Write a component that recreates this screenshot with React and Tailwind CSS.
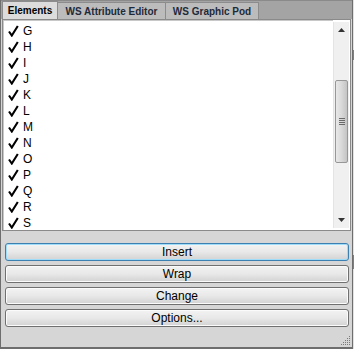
import React from "react";

const items = ["G","H","I","J","K","L","M","N","O","P","Q","R","S"];

function Check() {
  return (
    <svg width="11" height="12" viewBox="0 0 11 12" className="shrink-0">
      <path d="M1 6.5 L3.8 10.5 L9.8 1" fill="none" stroke="#000" strokeWidth="2.1" strokeLinejoin="miter" />
    </svg>
  );
}

function Btn({ label, focus }) {
  return (
    <div
      className={
        "h-[18px] rounded-[3px] border flex items-center justify-center text-[12px] text-black bg-gradient-to-b from-[#f3f3f3] via-[#e8e8e8] to-[#d2d2d2] " +
        (focus ? "border-[#3c7fb1] shadow-[inset_0_0_0_1px_#9fdcf7]" : "border-[#707070] shadow-[inset_0_0_0_1px_#fbfbfb]")
      }
    >
      {label}
    </div>
  );
}

export default function App() {
  return (
    <div className="w-[354px] h-[349px] flex bg-[#e2e2e2]" style={{ fontFamily: '"Liberation Sans", Arial, sans-serif' }}>
      <div className="w-[353px] h-[349px] flex flex-col bg-[#d6d6d6] border-l border-r border-b-2 border-[#6e6e6e]">
        {/* tab bar */}
        <div className="h-[19px] flex items-end bg-[#a4a4a4] border-t border-[#8a8a8a] pl-[1px]">
          <div className="w-[56px] h-[18px] flex items-center justify-center bg-[#dcdcdc] border border-b-0 border-[#8c8c8c] text-[10px] font-bold text-black">Elements</div>
          <div className="w-[108px] h-[17px] flex items-center justify-center bg-[#bcbcbc] border border-l-0 border-b-0 border-[#8c8c8c] text-[10px] font-bold text-[#1e2a3a]">WS Attribute Editor</div>
          <div className="w-[93px] h-[17px] flex items-center justify-center bg-[#bcbcbc] border border-l-0 border-b-0 border-[#8c8c8c] text-[10px] font-bold text-[#1e2a3a]">WS Graphic Pod</div>
        </div>
        {/* list */}
        <div className="mx-[1px] h-[212px] flex bg-white border border-[#8a8a8a]">
          <div className="flex-1 flex flex-col pt-[2px] pl-[4px] border-l border-t border-[#c8c8c8]">
            {items.map((l) => (
              <div key={l} className="h-[16px] flex items-center gap-[4px] text-[12px] text-black">
                <Check />
                <span>{l}</span>
              </div>
            ))}
          </div>
          <div className="w-[16px] my-[2px] mr-[1px] flex flex-col bg-[#f0f0f0] border-l border-[#e4e4e4]">
            <div className="h-[16px] flex items-center justify-center">
              <svg width="7" height="4" viewBox="0 0 7 4"><path d="M0 4 L3.5 0 L7 4 Z" fill="#333" /></svg>
            </div>
            <div className="h-[42px]" />
            <div className="h-[83px] mx-[1px] rounded-[2px] border border-[#979797] bg-gradient-to-r from-[#e8e8e8] via-[#d9d9d9] to-[#c4c4c4] flex items-center justify-center">
              <div className="flex flex-col gap-[1px]">
                <div className="w-[6px] h-[1px] bg-[#6a6a6a]" />
                <div className="w-[6px] h-[1px] bg-[#6a6a6a]" />
                <div className="w-[6px] h-[1px] bg-[#6a6a6a]" />
                <div className="w-[6px] h-[1px] bg-[#6a6a6a]" />
              </div>
            </div>
            <div className="flex-1" />
            <div className="h-[16px] flex items-center justify-center">
              <svg width="7" height="4" viewBox="0 0 7 4"><path d="M0 0 L7 0 L3.5 4 Z" fill="#333" /></svg>
            </div>
          </div>
        </div>
        {/* buttons */}
        <div className="flex flex-col gap-[4px] pt-[12px] pl-[4px] pr-[3px]">
          <Btn label="Insert" focus />
          <Btn label="Wrap" />
          <Btn label="Change" />
          <Btn label="Options..." />
        </div>
        <div className="flex-1 flex items-end justify-end pr-[1px] pb-[1px]">
          <svg width="10" height="10" viewBox="0 0 10 10">
            {[[8,0],[6,2],[8,2],[4,4],[6,4],[8,4],[2,6],[4,6],[6,6],[8,6],[0,8],[2,8],[4,8],[6,8],[8,8]].map(([x,y],i)=>(
              <rect key={i} x={x} y={y} width="1" height="1" fill="#7a7a7a" />
            ))}
          </svg>
        </div>
      </div>
      <div className="w-[1px] h-[349px] flex flex-col">
        <div className="h-[50px]" />
        <div className="h-[10px] bg-[#3d8ee0]" />
        <div className="h-[195px]" />
        <div className="h-[14px] bg-[#3d8ee0]" />
      </div>
    </div>
  );
}
